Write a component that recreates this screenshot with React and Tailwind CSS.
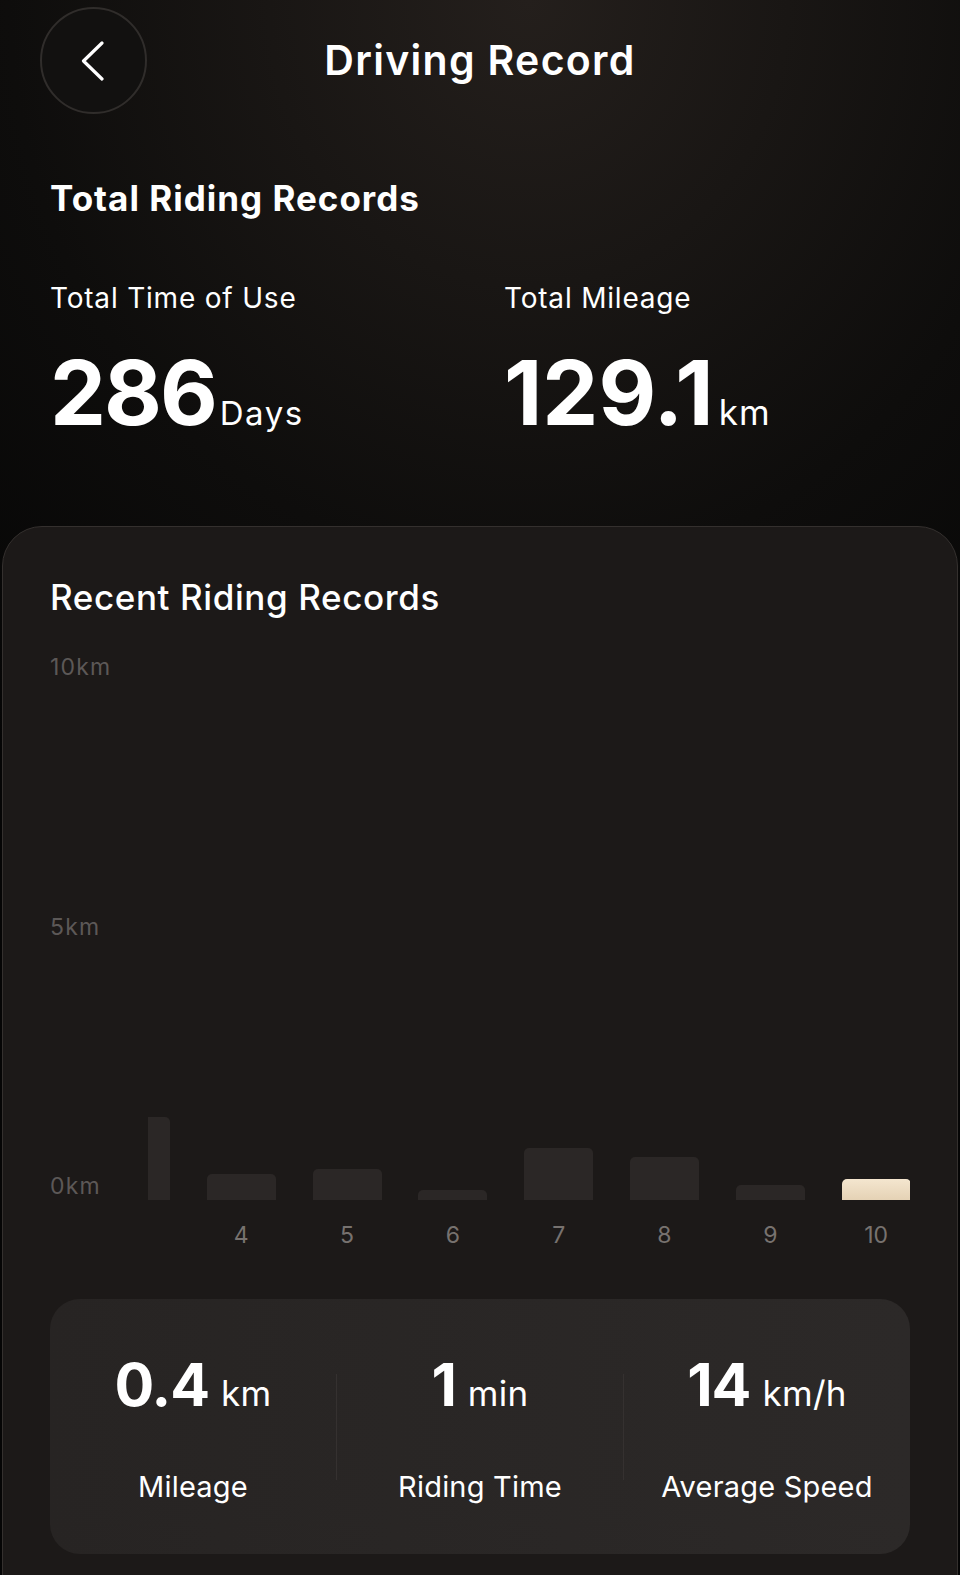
const bars = [
    { label: "", h: 83 },
    { label: "4", h: 26 },
    { label: "5", h: 31 },
    { label: "6", h: 10 },
    { label: "7", h: 52 },
    { label: "8", h: 43 },
    { label: "9", h: 15 },
    { label: "10", h: 21, active: true },
];

const stats = [
    { value: "0.4", unit: "km", label: "Mileage" },
    { value: "1", unit: "min", label: "Riding Time" },
    { value: "14", unit: "km/h", label: "Average Speed" },
];

function BackIcon() {
    return (
        <svg width="24" height="40" viewBox="0 0 24 40" fill="none" className="-translate-x-[1px]">
            <path d="M21 2 L2.5 20 L21 38" stroke="white" strokeWidth="3.2" strokeLinecap="round" strokeLinejoin="round" />
        </svg>
    );
}

export default function App() {
    return (
        <div className="min-h-[1575px] w-[960px] overflow-hidden bg-[#050505] bg-[radial-gradient(ellipse_90%_60%_at_55%_0%,#241f1c_0%,#0e0d0c_60%,#050505_100%)] font-['Inter','Liberation_Sans',sans-serif] text-white">
            {/* --- HEADER --- */}
            <header className="grid grid-cols-[107px_1fr_107px] items-center px-[40px] pt-[7px]">
                <button className="flex h-[107px] w-[107px] items-center justify-center rounded-full border-2 border-[#302d2b] bg-[#121110]">
                    <BackIcon />
                </button>
                <h1 className="text-center text-[41px] font-semibold leading-none tracking-[1.3px]">
                    Driving Record
                </h1>
                <div />
            </header>

            {/* --- TOTALS --- */}
            <section className="px-[50px]">
                <h2 className="mt-[64px] text-[35px] font-bold leading-[40px] tracking-[1px]">
                    Total Riding Records
                </h2>
                <div className="mt-[63px] grid grid-cols-[454px_1fr]">
                    <div>
                        <p className="text-[28px] leading-[34px] tracking-[0.8px]">Total Time of Use</p>
                        <div className="mt-[33px] flex items-baseline">
                            <span className="text-[89px] font-bold leading-none tracking-[-2px]">286</span>
                            <span className="ml-[4px] text-[33px] leading-none tracking-[1.5px]">Days</span>
                        </div>
                    </div>
                    <div>
                        <p className="text-[28px] leading-[34px] tracking-[0.8px]">Total Mileage</p>
                        <div className="mt-[33px] flex items-baseline">
                            <span className="text-[89px] font-bold leading-none tracking-[0px]">129.1</span>
                            <span className="ml-[5px] text-[35px] leading-none tracking-[1px]">km</span>
                        </div>
                    </div>
                </div>
            </section>

            {/* --- RECENT CARD --- */}
            <section className="mx-[2px] mt-[89px] min-h-[1060px] rounded-t-[40px] border border-[#34302e] bg-[#1c1918] px-[47px] pt-[50px]">
                <h2 className="text-[35px] font-medium leading-[40px] tracking-[0.6px]">Recent Riding Records</h2>

                {/* Chart */}
                <div className="mt-[36px] flex">
                    <div className="flex h-[547px] w-[98px] flex-col justify-between text-[23px] leading-[28px] tracking-[1.2px] text-[#5c5857]">
                        <span>10km</span>
                        <span>5km</span>
                        <span>0km</span>
                    </div>
                    <div className="flex-1 overflow-hidden">
                        <div className="-ml-[47px] flex h-[547px] items-end gap-[36.8px]">
                            {bars.map((b, i) => (
                                <div
                                    key={i}
                                    className={
                                        b.active
                                            ? "w-[69px] shrink-0 rounded-t-[5px] bg-gradient-to-b from-[#f4e6cf] to-[#e5d2b5]"
                                            : "w-[69px] shrink-0 rounded-t-[5px] bg-[#2b2726]"
                                    }
                                    style={{ height: b.h }}
                                />
                            ))}
                        </div>
                        <div className="-ml-[47px] mt-[21px] flex h-[28px] gap-[36.8px] text-[23px] leading-[28px] text-[#77726f]">
                            {bars.map((b, i) => (
                                <span key={i} className="w-[69px] shrink-0 text-center">
                                    {b.label}
                                </span>
                            ))}
                        </div>
                    </div>
                </div>

                {/* Stats panel */}
                <div className="mt-[50px] flex h-[255px] items-stretch rounded-[30px] bg-[#282524] bg-gradient-to-r from-[#272423] to-[#2c2928]">
                    {stats.map((s, i) => (
                        <div key={s.label} className="contents">
                            {i > 0 && <div className="h-[106px] w-px self-center bg-[#353130]" />}
                            <div className="flex flex-1 flex-col items-center pt-[56px]">
                                <div className="flex items-baseline">
                                    <span className="text-[59px] font-bold leading-none tracking-[-1px]">{s.value}</span>
                                    <span className="ml-[12px] text-[35px] leading-none tracking-[0.3px]">{s.unit}</span>
                                </div>
                                <p className="mt-[55px] text-[29px] leading-[36px] tracking-[0.2px]">{s.label}</p>
                            </div>
                        </div>
                    ))}
                </div>
            </section>
        </div>
    );
}
